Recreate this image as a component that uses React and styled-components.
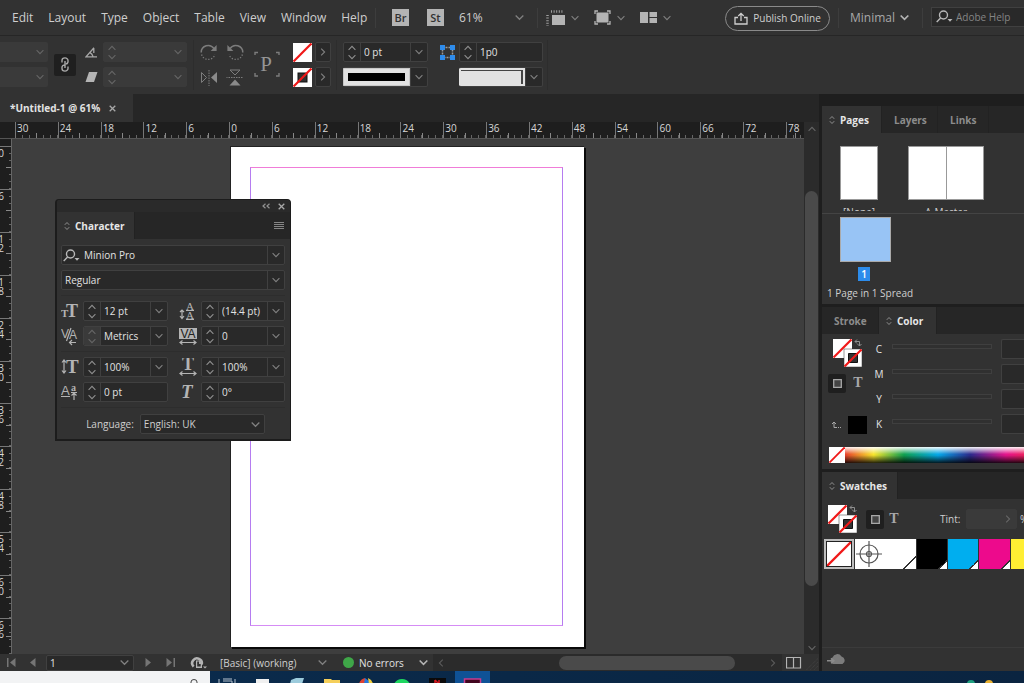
import React from "react";
import styled, { createGlobalStyle } from "styled-components";

const c = {
  panel: "#323232",
  dark: "#262626",
  edge: "#1e1e1e",
  canvas: "#3e3e3e",
  field: "#292929",
  line: "#404040",
  text: "#cfcfcf",
  bright: "#e2e2e2",
  dim: "#8c8c8c",
};

const GlobalStyle = createGlobalStyle`
  *, *::before, *::after { box-sizing: border-box; }
  body { margin: 0; background: ${c.canvas}; overflow: hidden; }
  body, button, input, select { font-family: "Open Sans", "Noto Sans", sans-serif; }
  button, input, select { margin: 0; padding: 0; border: 0; border-radius: 0; background: none; color: inherit; font-size: inherit; }
  svg { display: block; flex: none; }
`;

/* ---------- shell ---------- */

const Shell = styled.div`
  display: flex;
  flex-direction: column;
  height: 100vh;
  overflow: hidden;
  color: ${c.text};
  font-size: 10px;
  background: ${c.panel};
`;

const Row = styled.div`
  display: flex;
  align-items: center;
  gap: ${(p) => p.$gap || 0}px;
`;

const Stack = styled.div`
  display: flex;
  flex-direction: column;
  flex: none;
  gap: ${(p) => p.$gap || 0}px;
  width: ${(p) => (p.$w ? p.$w + "px" : "auto")};
  margin-left: ${(p) => p.$ml || 0}px;
`;

const IconButton = styled.button`
  display: flex;
  align-items: center;
  justify-content: center;
  flex: none;
  width: ${(p) => p.$w || 16}px;
  height: ${(p) => p.$h || 20}px;
  margin-left: ${(p) => p.$ml || 0}px;
  color: ${(p) => p.$color || "#8f8f8f"};
  background: ${(p) => p.$bg || "none"};
  border-radius: 2px;
`;

const Divider = styled.span`
  flex: none;
  width: 1px;
  height: ${(p) => p.$h || 20}px;
  margin: 0 ${(p) => p.$r || 0}px 0 ${(p) => p.$l || 0}px;
  background: ${(p) => (p.$h ? "#2d2d2d" : "#3d3d3d")};
`;

/* ---------- menu bar ---------- */

const MenuBar = styled.header`
  display: flex;
  align-items: center;
  flex: none;
  height: 36px;
  border-bottom: 1px solid ${c.dark};
  font-size: 12px;
  white-space: nowrap;
  overflow: hidden;
`;

const Menus = styled.nav`
  display: flex;
  flex: none;
  gap: 15px;
  width: 375px;
  padding-left: 12px;
`;

const MenuButton = styled.button`
  line-height: 20px;
`;

const AppBadge = styled.button`
  flex: none;
  width: 17px;
  height: 17px;
  margin-left: ${(p) => p.$ml}px;
  background: #b4b4b4;
  color: #323232;
  font-weight: 600;
  font-size: 11px;
  line-height: 16px;
`;

const PublishSlot = styled.div`
  display: flex;
  justify-content: flex-end;
  flex: none;
  width: 155px;
`;

const Publish = styled.button`
  display: flex;
  align-items: center;
  justify-content: center;
  gap: 5px;
  flex: none;
  width: 105px;
  height: 25px;
  margin-top: 1px;
  border: 1px solid #8a8a8a;
  border-radius: 13px;
  font-size: 10px;
`;

const HelpSearch = styled.label`
  display: flex;
  align-items: center;
  gap: 3px;
  flex: 1;
  min-width: 60px;
  height: 20px;
  margin-bottom: 2px;
  padding-left: 4px;
  border: 1px solid ${c.line};
  border-right: 0;
  background: ${c.field};
  font-size: 10px;
  input { width: 100%; min-width: 0; outline: 0; }
  input::placeholder { color: #858585; opacity: 1; }
`;

/* ---------- controls ---------- */

const SelectWrap = styled.label`
  display: grid;
  align-items: center;
  flex: none;
  width: ${(p) => p.$w}px;
  height: ${(p) => p.$h || 20}px;
  margin-left: ${(p) => p.$ml || 0}px;
  color: ${(p) => p.$color || c.text};
  border: 1px solid ${(p) => (p.$box ? c.line : "transparent")};
  border-radius: 2px;
  background: ${(p) => (p.$box ? c.field : "none")};
  > * { grid-area: 1 / 1; }
  > svg { justify-self: end; margin-right: ${(p) => (p.$box ? 4 : 0)}px; pointer-events: none; }
  select { appearance: none; width: 100%; height: 100%; padding-left: ${(p) => (p.$box ? 3 : 0)}px; outline: 0; }
`;

const Field = styled.div`
  display: flex;
  flex: none;
  width: ${(p) => (p.$w ? p.$w + "px" : "100%")};
  height: 20px;
  border: 1px solid ${(p) => (p.$off ? "#3a3a3a" : c.line)};
  border-radius: 2px;
  background: ${(p) => (p.$off ? "#3a3a3a" : c.field)};
  overflow: hidden;
  input { flex: 1; min-width: 0; width: 0; padding-left: 3px; outline: 0; color: ${c.bright}; }
`;

const Spinner = styled.span`
  display: flex;
  flex-direction: column;
  justify-content: center;
  gap: 3px;
  flex: none;
  width: 17px;
  border-right: 1px solid ${(p) => (p.$off ? "transparent" : c.line)};
  background: ${(p) => (p.$raised ? "#3a3a3a" : "none")};
  button { display: flex; justify-content: center; height: 6px; align-items: center; }
`;

const DropButton = styled.button`
  display: flex;
  align-items: center;
  justify-content: center;
  flex: none;
  width: 17px;
  border-left: 1px solid ${(p) => (p.$off ? "transparent" : c.line)};
`;

function Chevron({ w = 8, dir = "down", color = "#808080", sw = 1.1 }) {
  const rot = { down: 0, up: 180, right: -90, left: 90 }[dir];
  return (
    <svg width={w} height={w} viewBox="0 0 8 8" fill="none" stroke={color} strokeWidth={sw}>
      <path d="M0.6 2.2 L4 5.6 L7.4 2.2" transform={`rotate(${rot} 4 4)`} />
    </svg>
  );
}

function Spin({ off, raised }) {
  const col = off || raised ? "#666" : "#8f8f8f";
  return (
    <Spinner $off={off} $raised={raised}>
      <button aria-label="Increase"><Chevron dir="up" color={col} /></button>
      <button aria-label="Decrease"><Chevron color={col} /></button>
    </Spinner>
  );
}

function NumberField({ label, value = "", w, drop = true, off, raised }) {
  return (
    <Field $w={w} $off={off}>
      <Spin off={off} raised={raised} />
      <input aria-label={label} defaultValue={value} disabled={off} />
      {drop && <DropButton $off={off} aria-label={label + " options"}><Chevron color={off ? "#666" : "#808080"} /></DropButton>}
    </Field>
  );
}

function Select({ label, value, w, h, ml, box, color, chevron }) {
  return (
    <SelectWrap $w={w} $h={h} $ml={ml} $box={box} $color={color}>
      <select aria-label={label} defaultValue={value}><option>{value}</option></select>
      <Chevron w={9} {...chevron} />
    </SelectWrap>
  );
}

function SearchIcon() {
  return (
    <svg width="17" height="13" viewBox="0 0 17 13" fill="none" stroke="#b8b8b8" strokeWidth="1.4">
      <circle cx="7.5" cy="5" r="4" />
      <path d="M4.6 8 L0.7 12" />
      <path d="M11.5 9 h5 l-2.5 2.8 z" fill="#b8b8b8" stroke="none" />
    </svg>
  );
}

/* ---------- control strip ---------- */

const ControlBar = styled.div`
  display: flex;
  align-items: center;
  flex: none;
  height: 58px;
  padding-bottom: 1px;
  overflow: hidden;
`;

const OpenField = styled.div`
  display: flex;
  justify-content: flex-end;
  width: 48px;
  height: 20px;
  background: #3a3a3a;
  border-radius: 0 2px 2px 0;
`;

const PreviewField = styled(Field)`
  border-left: 0;
`;

const StrokePreview = styled.span`
  display: flex;
  align-items: center;
  flex: 1;
  padding: 0 4px;
  border: 1px solid #c8c8c8;
  background: #e2e2e2;
  &::after { content: ""; flex: 1; height: 8px; background: #000; }
`;

const CornerPreview = styled.span`
  flex: 1;
  padding: 2px;
  background: #e2e2e2;
  &::after { content: ""; display: block; height: 14px; border: solid #444; border-width: 1px 2px 0 0; }
`;

const ArrowBox = styled(IconButton)`
  border: 1px solid ${c.line};
  background: ${c.field};
`;

function NoneSwatch({ size = 19, hollow }) {
  return (
    <svg width={size} height={size} viewBox="0 0 19 19">
      <rect width="19" height="19" fill="#fff" />
      {hollow && <rect x="5" y="5" width="9" height="9" fill="#323232" stroke="#111" />}
      <path d="M0.5 18.5 L18.5 0.5" stroke="#f01818" strokeWidth="2.2" />
    </svg>
  );
}

function Rotate({ flip }) {
  return (
    <svg width="18" height="17" viewBox="0 0 18 17" fill="none" stroke="#7c7c7c" strokeWidth="1.5">
      <g transform={flip ? "translate(18 0) scale(-1 1)" : undefined}>
        <path d="M1.2 8.5 A7 7 0 0 1 14 4.6" />
        <path d="M16.6 1 V7 H10.6 Z" fill="#7c7c7c" stroke="none" />
        <path d="M1.6 10.5 A7 7 0 0 0 15 10.5" strokeDasharray="1.3 1.6" strokeWidth="1.2" />
      </g>
    </svg>
  );
}

function FlipIcon({ vertical }) {
  return (
    <svg width="18" height="17" viewBox="0 0 18 17" fill="none" stroke="#7c7c7c">
      <g transform={vertical ? "rotate(90 9 8.5)" : undefined}>
        <path d="M1.5 3.5 V13.5 L6.5 8.5 Z" />
        <path d="M9 1 V17" strokeDasharray="1.5 1" />
        <path d="M17 3 V14 L11 8.5 Z" fill="#8a8a8a" stroke="none" />
      </g>
    </svg>
  );
}

function ControlStrip() {
  return (
    <ControlBar>
      <Stack $gap={5}>
        {["X", "Y"].map((k) => (
          <OpenField key={k}><DropButton $off aria-label={k + " options"}><Chevron color="#666" /></DropButton></OpenField>
        ))}
      </Stack>
      <IconButton $w={22} $h={22} $ml={6} $bg="#1f1f1f" aria-label="Constrain proportions">
        <svg width="8" height="15" viewBox="0 0 8 15" fill="none" stroke="#a8a8a8" strokeWidth="1.4">
          <path d="M1 5.5 V3.5 A3 2.6 0 0 1 7 3.5 V5 A2.5 2.5 0 0 1 4.5 7" />
          <path d="M7 9.5 V11.5 A3 2.6 0 0 1 1 11.5 V10 A2.5 2.5 0 0 1 3.5 8 M4 4 V11" />
        </svg>
      </IconButton>
      <Stack $gap={5} $ml={7}>
        <IconButton as="span"><svg width="13" height="11" viewBox="0 0 13 11" fill="none" stroke="#a8a8a8" strokeWidth="1.3"><path d="M9 0.8 L1 9.8 H12 M5 5.6 A6 6 0 0 1 8 9.6 M8.8 1 V6" /></svg></IconButton>
        <IconButton as="span"><svg width="13" height="10" viewBox="0 0 13 10"><path d="M4 0 H12.5 L9 10 H0.5 Z" fill="#b4b4b4" /></svg></IconButton>
      </Stack>
      <Stack $gap={5} $w={84} $ml={4}>
        <NumberField label="Rotation angle" off />
        <NumberField label="Shear angle" off />
      </Stack>
      <Divider $h={50} $l={6} $r={6} />
      <Stack $gap={5}>
        <Row $gap={8}>
          <IconButton $w={18} aria-label="Rotate clockwise"><Rotate /></IconButton>
          <IconButton $w={18} aria-label="Rotate anticlockwise"><Rotate flip /></IconButton>
        </Row>
        <Row $gap={8}>
          <IconButton $w={18} aria-label="Flip horizontal"><FlipIcon /></IconButton>
          <IconButton $w={18} aria-label="Flip vertical"><FlipIcon vertical /></IconButton>
        </Row>
      </Stack>
      <Stack $ml={10}>
        <svg width="26" height="27" viewBox="0 0 26 27" fill="none" stroke="#7c7c7c">
          <path d="M1 4 V1.5 H4 M22 1.5 H25 V4 M1 22 V25 H4 M22 25 H25 V22" strokeWidth="1.4" />
          <text x="12" y="20" textAnchor="middle" fontFamily="Liberation Serif" fontSize="21" fill="#959595" stroke="none">P</text>
        </svg>
      </Stack>
      <Stack $gap={6} $ml={13}>
        <NoneSwatch />
        <NoneSwatch hollow />
      </Stack>
      <Stack $gap={5} $ml={3}>
        <ArrowBox aria-label="Fill options"><Chevron dir="right" /></ArrowBox>
        <ArrowBox aria-label="Stroke options"><Chevron dir="right" /></ArrowBox>
      </Stack>
      <Divider $h={50} $l={5} $r={6} />
      <Stack $gap={5} $w={85}>
        <NumberField label="Stroke weight" value="0 pt" />
        <PreviewField><StrokePreview /><DropButton aria-label="Stroke type"><Chevron /></DropButton></PreviewField>
      </Stack>
      <Stack $gap={5} $ml={11}>
        <IconButton as="span">
          <svg width="15" height="15" viewBox="0 0 15 15"><path d="M2.5 2.5 H12.5 V12.5 H2.5 Z" fill="none" stroke="#999" strokeWidth="1.5" strokeDasharray="2 1" /><path d="M0 0h5v5h-5z M10 0h5v5h-5z M0 10h5v5h-5z M10 10h5v5h-5z" fill="#2f8ceb" /></svg>
        </IconButton>
        <IconButton as="span" />
      </Stack>
      <Stack $gap={5} $w={84} $ml={4}>
        <NumberField label="Corner size" value="1p0" drop={false} />
        <PreviewField><CornerPreview /><DropButton aria-label="Corner shape"><Chevron /></DropButton></PreviewField>
      </Stack>
      <Divider $h={50} $l={4} />
    </ControlBar>
  );
}

function TopMenu() {
  return (
    <MenuBar>
      <Menus>
        {["Edit", "Layout", "Type", "Object", "Table", "View", "Window", "Help"].map((m) => <MenuButton key={m}>{m}</MenuButton>)}
      </Menus>
      <Divider />
      <AppBadge $ml={16}>Br</AppBadge>
      <AppBadge $ml={18}>St</AppBadge>
      <Select label="Zoom level" value="61%" w={67} ml={14} />
      <Divider $l={12} $r={8} />
      <svg width="19" height="16" viewBox="0 0 19 16"><path d="M6 5 h13 v10 h-13z" fill="#b4b4b4" /><path d="M5 1.5 H18 M1.5 5 V16" stroke="#a0a0a0" strokeWidth="2.5" strokeDasharray="1 1.6" /></svg>
      <IconButton aria-label="View options" $ml={2}><Chevron /></IconButton>
      <IconButton aria-label="Screen mode" $ml={10} $w={18}>
        <svg width="17" height="15" viewBox="0 0 17 15"><path d="M2.5 2.500h12v10h-12z" fill="#b4b4b4" /><path d="M1 4V1H4M13 1h3v3M1 11v3h3M13 14h3v-3" fill="none" stroke="#b4b4b4" strokeWidth="1.3" /></svg>
      </IconButton>
      <IconButton aria-label="Screen mode options" $ml={2}><Chevron /></IconButton>
      <IconButton aria-label="Arrange documents" $ml={10} $w={18}>
        <svg width="17" height="11" viewBox="0 0 17 11"><path d="M0 0h8v11h-8z M9.5 0h7.500v5h-7.500z M9.5 6h7.500v5h-7.500z" fill="#b4b4b4" /></svg>
      </IconButton>
      <IconButton aria-label="Arrange options" $ml={2}><Chevron /></IconButton>
      <PublishSlot>
        <Publish>
          <svg width="14" height="13" viewBox="0 0 14 13" fill="none" stroke="#cfcfcf" strokeWidth="1.3"><path d="M4 5.5H1V12H13V5.5H10M7 9V1.5M4.3 4L7 1.3L9.7 4" /></svg>
          Publish Online
        </Publish>
      </PublishSlot>
      <Divider $l={8} $r={10} />
      <Select label="Workspace" value="Minimal" w={61} color="#a8a8a8" chevron={{ sw: 1.5, color: "#b4b4b4" }} />
      <Divider $l={12} $r={8} />
      <HelpSearch><SearchIcon /><input aria-label="Adobe Help" placeholder="Adobe Help" /></HelpSearch>
    </MenuBar>
  );
}

/* ---------- document area ---------- */

const Main = styled.main`
  display: flex;
  flex: 1;
  min-height: 0;
`;

const DocColumn = styled.section`
  display: flex;
  flex-direction: column;
  flex: 1;
  min-width: 0;
  background: ${c.dark};
`;

const DocTab = styled.div`
  display: flex;
  align-items: center;
  gap: 9px;
  flex: none;
  width: 133px;
  height: 28px;
  padding-left: 10px;
  background: ${c.panel};
  color: ${c.bright};
  font-weight: 700;
  white-space: nowrap;
`;

const Viewport = styled.div`
  display: flex;
  flex: 1;
  min-height: 0;
`;

const RulerArea = styled.div`
  display: flex;
  flex-direction: column;
  flex: 1;
  min-width: 0;
`;

const TopRuler = styled.div`
  display: grid;
  grid-template-columns: repeat(18, 1fr) 18px;
  flex: none;
  height: 17px;
  padding-left: 15px;
  background: ${c.edge};
  border-bottom: 1px solid #555;
  overflow: hidden;
`;

const Inch = styled.span`
  padding-left: 1px;
  border-left: 1px solid #777;
  color: #d8d8d8;
  font-size: 10px;
  line-height: 13px;
  overflow: hidden;
  background:
    linear-gradient(#888, #888) 50% 100% / 1px 5px no-repeat,
    repeating-linear-gradient(90deg, transparent 0 6px, #666 6px 7px) 0 100% / 100% 3px no-repeat;
`;

const CanvasRow = styled.div`
  display: flex;
  flex: 1;
  min-height: 0;
`;

const SideRuler = styled.div`
  display: grid;
  grid-template-rows: repeat(11, 1fr) 36px;
  flex: none;
  width: 12px;
  padding-top: 7px;
  background: ${c.edge};
  border-right: 1px solid #666;
  overflow: hidden;
`;

const SideInch = styled.span`
  display: flex;
  flex-direction: column;
  align-items: flex-end;
  padding: 2px 7px 0 0;
  border-top: 1px solid #777;
  color: #d8d8d8;
  font-size: 10px;
  line-height: 9px;
  overflow: hidden;
  background:
    linear-gradient(#888, #888) 100% 50% / 5px 1px no-repeat,
    repeating-linear-gradient(transparent 0 6px, #666 6px 7px) 100% 0 / 2px 100% no-repeat;
`;

const Canvas = styled.div`
  position: relative;
  display: flex;
  justify-content: center;
  flex: 1;
  min-width: 0;
  padding: 7px 3px 7px 0;
  background: ${c.canvas};
`;

const Paper = styled.div`
  display: flex;
  width: 354px;
  padding: 20px 21px 21px 19px;
  background: #fff;
  box-shadow: 2px 2px 0 #0a0a0a;
  border: 1px solid #222;
  border-width: 1px 0 0 1px;
  &::after { content: ""; flex: 1; border: 1px solid #b57cf0; border-top-color: #f07cd8; border-bottom-color: #d58cf5; }
`;

const VScroll = styled.div`
  display: flex;
  flex-direction: column;
  align-items: center;
  justify-content: space-between;
  flex: none;
  width: 15px;
  padding: 3px 0 2px;
  background: #2b2b2b;
`;

const VThumb = styled.span`
  width: 13px;
  height: 75%;
  border-radius: 7px;
  background: #4a4a4a;
`;

/* ---------- status bar ---------- */

const StatusBar = styled.footer`
  display: flex;
  align-items: center;
  flex: none;
  height: 17px;
  background: ${c.panel};
  white-space: nowrap;
  overflow: hidden;
`;

const StatusDot = styled.span`
  flex: none;
  width: 11px;
  height: 11px;
  margin: 0 4px 0 15px;
  border-radius: 50%;
  background: #3fa648;
`;

const HScroll = styled.div`
  display: flex;
  align-items: center;
  justify-content: space-between;
  flex: 1;
  height: 100%;
  margin-left: 4px;
  padding: 0 5px 0 4px;
  background: #2b2b2b;
`;

const HThumb = styled.span`
  width: 176px;
  height: 14px;
  margin-left: 80px;
  border-radius: 7px;
  background: #4a4a4a;
`;

function Step({ bar, flip, label, ml }) {
  return (
    <IconButton $w={12} $h={14} $ml={ml} aria-label={label}>
      <svg width="10" height="9" viewBox="0 0 10 9" fill="#757575">
        <g transform={flip ? "translate(10 0) scale(-1 1)" : undefined}>
          {bar && <path d="M0 0h1.5v9h-1.5z" />}
          <path d="M8.5 0V9L3 4.5Z" />
        </g>
      </svg>
    </IconButton>
  );
}

function DocumentStatus() {
  return (
    <StatusBar>
      <Step bar label="First page" ml={6} />
      <Step label="Previous page" ml={8} />
      <Select label="Page" value="1" w={88} h={16} ml={8} box color={c.bright} chevron={{}} />
      <Step flip label="Next page" ml={9} />
      <Step bar flip label="Last page" ml={9} />
      <IconButton $w={18} $h={16} $ml={13} aria-label="Preflight">
        <svg width="17" height="13" viewBox="0 0 17 13" fill="none" stroke="#b4b4b4" strokeWidth="2.6">
          <path d="M3.6 10.6 A4.800 4.800 0 1 1 11.6 8.5" />
          <path d="M6 4.500h3.500l2.500 2.500v5h-6z" fill="#b4b4b4" stroke="none" />
          <path d="M7.2 5.500v5h3.500v-2.500h-1.700v-2.500z" fill="#323232" stroke="none" />
          <path d="M13 10.5h4l-2 2z" fill="#b4b4b4" stroke="none" />
        </svg>
      </IconButton>
      <Select label="Preflight profile" value="[Basic] (working)" w={109} h={16} ml={12} />
      <StatusDot />
      <Select label="Errors" value="No errors" w={71} h={16} color={c.bright} chevron={{ color: "#b4b4b4", sw: 1.4 }} />
      <HScroll><Chevron dir="left" color="#5a5a5a" /><HThumb /><Chevron dir="right" color="#5a5a5a" /></HScroll>
      <IconButton $w={20} $h={14} $ml={2} aria-label="Split layout">
        <svg width="16" height="12" viewBox="0 0 16 12" fill="none" stroke="#b4b4b4"><path d="M0.5 0.5h14v10.500h-14zM7.5 0v11" strokeWidth="1.2" /></svg>
      </IconButton>
      <svg width="15" height="16" viewBox="0 0 16 16" stroke="#484848" strokeDasharray="1 1"><path d="M3 15L15 3M7 15L15 7M11 15L15 11" /></svg>
    </StatusBar>
  );
}

/* ---------- tabbed panels ---------- */

const Tabs = styled.div`
  display: flex;
  flex: none;
  height: 27px;
  background: ${c.dark};
`;

const Tab = styled.button`
  display: flex;
  align-items: center;
  gap: 5px;
  width: ${(p) => p.$w}px;
  padding-left: ${(p) => (p.$on ? 7 : 12)}px;
  border-right: 1px solid #222;
  background: ${(p) => (p.$on ? c.panel : "none")};
  color: ${(p) => (p.$on ? "#e6e6e6" : c.dim)};
  font-weight: 700;
  font-size: 10px;
`;

function PanelTab({ on, w, children }) {
  return (
    <Tab $on={on} $w={w}>
      {on && <svg width="6" height="10" viewBox="0 0 6 10" fill="none" stroke="#8f8f8f"><path d="M0.8 3.8L3 1.5L5.2 3.8M0.8 6.2L3 8.5L5.2 6.2" /></svg>}
      {children}
    </Tab>
  );
}

const Floating = styled.section`
  position: absolute;
  left: 43px;
  top: 60px;
  width: 236px;
  border: 1px solid #1c1c1c;
  border-width: 1px 1px 2px 2px;
  border-radius: 4px 4px 0 0;
  background: ${c.panel};
  overflow: hidden;
`;

const TitleStrip = styled.div`
  display: flex;
  align-items: center;
  justify-content: flex-end;
  height: 12px;
  padding-right: 5px;
  gap: 8px;
  background: #2a2a2a;
`;

const TabLine = styled.div`
  display: flex;
  justify-content: space-between;
  align-items: center;
  padding-right: 6px;
  background: ${c.dark};
`;

const CharBody = styled.div`
  display: flex;
  flex-direction: column;
  gap: 5px;
  padding: 6px 5px 4px 4px;
`;

const Rule = styled.hr`
  width: 100%;
  height: 1px;
  margin: 0;
  border: 0;
  background: #2d2d2d;
`;

const CharGrid = styled.div`
  display: grid;
  grid-template-columns: 18px 85px 25px 84px;
  column-gap: 4px;
  row-gap: 5px;
  align-items: center;
  > :nth-child(4n + 3) { margin-left: 7px; }
`;

const LanguageRow = styled.div`
  display: flex;
  align-items: center;
  justify-content: center;
  gap: 6px;
  padding: 1px 0 1px 5px;
`;

const glyph = { fontFamily: "Liberation Serif", fill: "#b4b4b4", fontWeight: 700 };
const arrow = { fill: "none", stroke: "#b4b4b4", strokeWidth: 1.2 };

function CharIcon({ kind }) {
  const art = {
    size: <><text {...glyph} x="0" y="15" fontSize="11">T</text><text {...glyph} x="5" y="15" fontSize="18">T</text></>,
    leading: <><path {...arrow} d="M3 8V16M1 10L3 8L5 10M1 14L3 16.500L5 14" /><text {...glyph} fontWeight="400" x="7" y="8" fontSize="11">A</text><text {...glyph} fontWeight="400" x="7" y="17" fontSize="11">A</text><path {...arrow} d="M7 8.5H15M7 17.4H15" /></>,
    kerning: <><text {...glyph} fontFamily="Liberation Sans" fontWeight="400" x="0" y="11" fontSize="12">V</text><text {...glyph} fontFamily="Liberation Sans" fontWeight="400" x="8" y="12" fontSize="12">A</text><path {...arrow} d="M10 1L5.500 14M8 15.500H15M11 13L8.500 15.500L11 18" /></>,
    tracking: <><path d="M0 1h18v11h-18z" fill="#b4b4b4" /><text x="9" y="10.5" textAnchor="middle" fontFamily="Liberation Sans" fontSize="12" fill="#222">VA</text><path {...arrow} d="M1 15.500H17M3.500 13.500L1 15.500L3.500 17.500M14.500 13.500L17 15.500L14.500 17.500" /></>,
    vscale: <><path {...arrow} d="M3 2V15M1 4.500L3 2L5 4.500M1 12.500L3 15L5 12.500" /><text {...glyph} x="5" y="15" fontSize="19">T</text></>,
    hscale: <><text {...glyph} x="3" y="12" fontSize="18">T</text><path {...arrow} d="M1 15.500H17M3.500 13.500L1 15.500L3.500 17.500M14.500 13.500L17 15.500L14.500 17.500" /></>,
    baseline: <><text {...glyph} fontFamily="Liberation Sans" fontWeight="400" x="0" y="12" fontSize="13">A</text><text {...glyph} x="10" y="8" fontSize="10">a</text><path {...arrow} d="M0 13.500H9M10 9.500H16M13 10V17M10.500 12.500L13 10L15.500 12.500" /></>,
    skew: <text {...glyph} x="2" y="15" fontSize="19" fontStyle="italic">T</text>,
  }[kind];
  return <svg width="18" height="19" viewBox="0 0 18 19">{art}</svg>;
}

const CloseIcon = () => (
  <svg width="7" height="7" viewBox="0 0 7 7" stroke="#a8a8a8" strokeWidth="1.3"><path d="M0.7 0.7L6.3 6.3M6.3 0.7L0.7 6.3" /></svg>
);

const FontField = styled.div`
  display: flex;
  align-items: center;
  height: 20px;
  padding-left: 1px;
  border: 1px solid ${c.line};
  border-radius: 2px;
  background: ${c.field};
  input { flex: 1; min-width: 0; padding-left: 4px; outline: 0; color: ${c.bright}; }
  > button { height: 18px; }
`;

function CharacterPanel() {
  return (
    <Floating>
      <TitleStrip>
        <button aria-label="Collapse"><svg width="8" height="6" viewBox="0 0 8 6" fill="none" stroke="#8f8f8f" strokeWidth="1.2"><path d="M3.5 0.8L1 3L3.5 5.2M7.5 0.8L5 3L7.5 5.2" /></svg></button>
        <button aria-label="Close"><CloseIcon /></button>
      </TitleStrip>
      <TabLine>
        <Tabs><PanelTab on w={78}>Character</PanelTab></Tabs>
        <button aria-label="Panel menu"><svg width="10" height="8" viewBox="0 0 10 8" stroke="#858585"><path d="M0 0.5H10M0 2.5H10M0 4.5H10M0 6.5H10" /></svg></button>
      </TabLine>
      <CharBody>
        <FontField><SearchIcon /><input aria-label="Font family" defaultValue="Minion Pro" /><DropButton aria-label="Font list"><Chevron /></DropButton></FontField>
        <Field><input aria-label="Font style" defaultValue="Regular" /><DropButton aria-label="Style list"><Chevron /></DropButton></Field>
        <Rule />
        <CharGrid>
          <CharIcon kind="size" /><NumberField label="Font size" value="12 pt" />
          <CharIcon kind="leading" /><NumberField label="Leading" value="(14.4 pt)" />
          <CharIcon kind="kerning" /><NumberField label="Kerning" value="Metrics" raised />
          <CharIcon kind="tracking" /><NumberField label="Tracking" value="0" />
        </CharGrid>
        <Rule />
        <CharGrid>
          <CharIcon kind="vscale" /><NumberField label="Vertical scale" value="100%" />
          <CharIcon kind="hscale" /><NumberField label="Horizontal scale" value="100%" />
          <CharIcon kind="baseline" /><NumberField label="Baseline shift" value="0 pt" drop={false} />
          <CharIcon kind="skew" /><NumberField label="Skew" value="0°" drop={false} />
        </CharGrid>
        <Rule />
        <LanguageRow>
          <span>Language:</span>
          <Select label="Language" value="English: UK" w={125} box chevron={{}} />
        </LanguageRow>
      </CharBody>
    </Floating>
  );
}

/* ---------- dock ---------- */

const Dock = styled.aside`
  display: flex;
  flex-direction: column;
  flex: none;
  width: 205px;
  padding-top: 12px;
  border-left: 3px solid ${c.edge};
  background: ${c.edge};
  gap: 3px;
  overflow: hidden;
`;

const Panel = styled.section`
  display: flex;
  flex-direction: column;
  flex: ${(p) => (p.$grow ? "1" : "none")};
  background: ${c.panel};
`;

const Masters = styled.div`
  display: flex;
  gap: 30px;
  height: 81px;
  padding: 13px 0 0 18px;
  border-bottom: 1px solid #444;
`;

const Master = styled.figure`
  display: flex;
  flex-direction: column;
  align-items: center;
  flex: none;
  margin: 0;
  gap: 5px;
  height: 65px;
  overflow: hidden;
  line-height: 14px;
`;

const Sheets = styled.div`
  display: grid;
  flex: none;
  grid-template-columns: repeat(${(p) => p.$n}, 1fr);
  gap: 1px;
  width: ${(p) => p.$n * 38}px;
  height: 54px;
  border: 1px solid #999;
  background: #999;
  span { background: #fff; }
`;

const PageItem = styled.div`
  display: flex;
  flex-direction: column;
  align-items: center;
  gap: 5px;
  width: 51px;
  margin: 3px 0 0 18px;
`;

const PageThumb = styled.div`
  width: 51px;
  height: 45px;
  background: #98c4f5;
  border: 1px solid #aaa;
`;

const PageBadge = styled.span`
  width: 12px;
  height: 14px;
  margin-right: 3px;
  background: #2c8ceb;
  color: #fff;
  font-weight: 600;
  line-height: 14px;
  text-align: center;
`;

const Caption = styled.p`
  margin: 0;
  padding: 4px 0 3px 5px;
  line-height: 16px;
`;

const ColorBody = styled.div`
  display: flex;
  height: 108px;
  padding: 5px 0 0 6px;
`;

const ToolColumn = styled.div`
  display: grid;
  grid-template-columns: 20px 20px;
  grid-template-rows: 28px 6px 20px 22px 20px;
  width: 45px;
  align-items: center;
`;

const ProxySlot = styled.div`
  grid-column: 1 / 3;
  padding-left: 5px;
`;

const TypeGlyph = styled.button`
  flex: none;
  width: 20px;
  font-family: "Liberation Serif", serif;
  font-weight: 700;
  font-size: 14px;
  color: #a8a8a8;
`;

const BlackChip = styled.button`
  width: 19px;
  height: 18px;
  background: #000;
`;

const Channels = styled.div`
  display: flex;
  flex-direction: column;
  gap: 5px;
  flex: 1;
`;

const Channel = styled.div`
  display: grid;
  grid-template-columns: 19px 100px 1fr;
  align-items: center;
  label { color: ${c.bright}; text-align: center; padding-right: 7px; }
  input[type="range"] {
    appearance: none;
    width: 100px;
    height: 5px;
    margin-bottom: 6px;
    border: 1px solid #3f3f3f;
    background: #303030;
  }
  input[type="range"]::-webkit-slider-thumb { appearance: none; width: 0; height: 0; }
`;

const ChannelValue = styled.input`
  min-width: 0;
  width: auto;
  height: 20px;
  margin-left: 9px;
  border: 1px solid ${c.line};
  border-right: 0;
  border-radius: 2px 0 0 2px;
  background: ${c.field};
`;

const SpectrumRow = styled.div`
  display: flex;
  height: 22px;
  margin: 5px 0 0 7px;
`;

const Spectrum = styled.div`
  flex: 1;
  height: 16px;
  background:
    linear-gradient(rgba(255, 255, 255, 0.95), rgba(255, 255, 255, 0) 45%, rgba(0, 0, 0, 0) 50%, rgba(0, 0, 0, 0.85)),
    linear-gradient(90deg, #e8402c, #f7e52e 16%, #10a050 33%, #05a8ea 52%, #2c2a8c 70%, #e5148c 90%, #ec2060);
`;

function Proxy() {
  return (
    <svg width="29" height="28" viewBox="0 0 29 28">
      <path d="M0 0h19v19h-19z" fill="#fff" />
      <path d="M0.5 18.5L18.5 0.5" stroke="#f01818" strokeWidth="2.2" />
      <path d="M11 10h18v18h-18z" fill="#fff" stroke="#323232" strokeWidth="0.5" />
      <path d="M15.5 14.5h9v9h-9z" fill="#323232" stroke="#111" />
      <path d="M11.5 27.5L28.5 10.5" stroke="#f01818" strokeWidth="2.2" />
      <path d="M22 2.5H26.5V7M24.5 5L26.5 7L28.5 5M24 0.5L22 2.5L24 4.5" fill="none" stroke="#8f8f8f" />
    </svg>
  );
}

const BoxGlyph = () => (
  <svg width="9" height="9" viewBox="0 0 9 9"><path d="M0.7 0.7h7.600v7.600h-7.600z" fill="#444" stroke="#a8a8a8" strokeWidth="1.3" /></svg>
);

function ColorPanel() {
  return (
    <Panel>
      <Tabs><PanelTab w={57}>Stroke</PanelTab><PanelTab on w={58}>Color</PanelTab></Tabs>
      <ColorBody>
        <ToolColumn>
          <ProxySlot><Proxy /></ProxySlot>
          <span /><span />
          <IconButton $w={18} $h={19} $bg="#1f1f1f" aria-label="Formatting affects container"><BoxGlyph /></IconButton>
          <TypeGlyph aria-label="Formatting affects text">T</TypeGlyph>
          <span /><span />
          <IconButton aria-label="Last used colour"><svg width="10" height="8" viewBox="0 0 10 8" fill="none" stroke="#a8a8a8"><path d="M1 3L3 1L5 3M3 1V6.5H6M7 6.5H8M9 6.5H10" /></svg></IconButton>
          <BlackChip aria-label="Black" />
        </ToolColumn>
        <Channels>
          {["C", "M", "Y", "K"].map((k) => (
            <Channel key={k}>
              <label htmlFor={"ch-" + k}>{k}</label>
              <input id={"ch-" + k} type="range" defaultValue="0" />
              <ChannelValue aria-label={k + " value"} />
            </Channel>
          ))}
        </Channels>
      </ColorBody>
      <SpectrumRow><NoneSwatch size={16} /><Spectrum /></SpectrumRow>
    </Panel>
  );
}

const SwatchTools = styled.div`
  display: flex;
  align-items: center;
  height: 40px;
  padding-left: 6px;
  overflow: hidden;
  white-space: nowrap;
`;

const TintLabel = styled.label`
  flex: none;
  width: 26px;
  margin-left: 36px;
`;

const TintField = styled(Field)`
  margin-right: 3px;
`;

const SwatchRow = styled.div`
  display: flex;
  gap: 1px;
  height: 31px;
  margin-left: 2px;
  overflow: hidden;
`;

const Swatch = styled.button`
  display: flex;
  align-items: center;
  flex: none;
  width: ${(p) => p.$w || 30}px;
  height: 30px;
  background: ${(p) => (p.$plain ? p.$fill : `linear-gradient(135deg, ${p.$fill} 85%, #333 85% 87%, #fff 87%)`)};
  border: ${(p) => (p.$ring ? "2px solid #bdbdbd" : 0)};
  outline: ${(p) => (p.$ring ? "1px solid #222" : 0)};
  outline-offset: -3px;
`;

const PanelFooter = styled.div`
  display: flex;
  align-items: center;
  height: 24px;
  margin-top: auto;
  padding: 0 0 2px 5px;
  border-top: 1px solid #3b3b3b;
`;

function SwatchesPanel() {
  return (
    <Panel $grow>
      <Tabs><PanelTab on w={76}>Swatches</PanelTab></Tabs>
      <SwatchTools>
        <Proxy />
        <IconButton $w={18} $h={19} $ml={9} $bg="#1f1f1f" aria-label="Formatting affects container"><BoxGlyph /></IconButton>
        <TypeGlyph aria-label="Formatting affects text">T</TypeGlyph>
        <TintLabel htmlFor="tint">Tint:</TintLabel>
        <TintField $w={51} $off><input id="tint" disabled /><DropButton $off aria-label="Tint slider"><Chevron dir="right" color="#666" /></DropButton></TintField>
        %
      </SwatchTools>
      <SwatchRow>
        <Swatch $fill="#fff" $plain $ring aria-label="None"><svg width="26" height="26" viewBox="0 0 26 26"><path d="M1 25L25 1" stroke="#f01818" strokeWidth="2.4" /></svg></Swatch>
        <Swatch $fill="#fff" $w={61} aria-label="Registration">
          <svg width="28" height="28" viewBox="0 0 28 28" fill="none" stroke="#555" strokeWidth="1.2"><circle cx="14" cy="14" r="9" /><circle cx="14" cy="14" r="2.5" /><path d="M14 1V27M1 14H27" /></svg>
        </Swatch>
        <Swatch $fill="#000" aria-label="Black" />
        <Swatch $fill="#00aeef" aria-label="Cyan" />
        <Swatch $fill="#ed0a8c" $w={31} aria-label="Magenta" />
        <Swatch $fill="#ffee33" aria-label="Yellow" />
      </SwatchRow>
      <PanelFooter>
        <svg width="19" height="12" viewBox="0 0 19 12" fill="#7c7c7c"><path d="M6 11A3.500 3.500 0 0 1 5.500 4.500A5 5 0 0 1 14.500 3.500A4 4 0 0 1 15.500 11Z" /><path d="M0 7.800H6M4 5.300L7 7.800L4 10.300" fill="none" stroke="#8a8a8a" strokeWidth="1.4" /></svg>
      </PanelFooter>
    </Panel>
  );
}

/* ---------- desktop task bar ---------- */

const Taskbar = styled.div`
  display: flex;
  flex: none;
  height: 12px;
  overflow: hidden;
  background: linear-gradient(90deg, #0a2c4e, #0a2440);
`;

const TaskSearch = styled.div`
  display: flex;
  align-items: flex-end;
  justify-content: flex-end;
  flex: none;
  width: 210px;
  padding-right: 12px;
  background: #f2f3f4;
`;

const TaskItem = styled.button`
  display: flex;
  align-items: flex-end;
  justify-content: center;
  width: 35px;
  background: ${(p) => (p.$on ? "#0f5296" : "none")};
`;

const TrayIcons = styled.div`
  display: flex;
  align-items: flex-end;
  margin-left: auto;
  padding-right: 27px;
`;

const taskArt = [
  ["Task view", <path d="M3 1V5M7 3H16V5M7 1H16M19 1V5" stroke="#b8c4d0" fill="none" />],
  ["Store", <path d="M5 1h13v5h-13z" fill="#f0f0f0" />],
  ["Notes", <path d="M5 2L10 0H18L16 6H4Z" fill="#9ccbdc" />],
  ["Explorer", <path d="M3 1H10L11 2H19V6H3Z" fill="#f5cf5a" />],
  ["Browser", <><path d="M3 6A8 8 0 0 1 9 0V6Z" fill="#e04030" /><path d="M9 0L13 3V6H8Z" fill="#2478e0" /><path d="M12 0A8 8 0 0 1 17 6H13Z" fill="#f4d03a" /></>],
  ["Music", <path d="M3 6A9 9 0 0 1 19 6Z" fill="#1ed760" />],
  ["Video", <><path d="M3 0h17v6h-17z" fill="#0a0a0a" /><path d="M9 2V6M9 2L13 6M13 2V6" stroke="#d81820" strokeWidth="1.5" /></>],
  ["Layout editor", <path d="M3.5 1h16v7h-16z" fill="#41061f" stroke="#c83c90" strokeWidth="1.5" />],
];

const topLabels = [30, 24, 18, 12, 6, 0, 6, 12, 18, 24, 30, 36, 42, 48, 54, 60, 66, 72, 78];
const sideLabels = [0, 6, 12, 18, 24, 30, 36, 42, 48, 54, 60, 66];

export default function App() {
  return (
    <Shell>
      <GlobalStyle />
      <TopMenu />
      <ControlStrip />
      <Main>
        <DocColumn>
          <DocTab>*Untitled-1 @ 61%<button aria-label="Close document"><CloseIcon /></button></DocTab>
          <Viewport>
            <RulerArea>
              <TopRuler>{topLabels.map((n, i) => <Inch key={i}>{n}</Inch>)}</TopRuler>
              <CanvasRow>
                <SideRuler>
                  {sideLabels.map((n) => <SideInch key={n}>{String(n).split("").map((d, i) => <span key={i}>{d}</span>)}</SideInch>)}
                </SideRuler>
                <Canvas><Paper /><CharacterPanel /></Canvas>
              </CanvasRow>
            </RulerArea>
            <VScroll><Chevron dir="up" color="#666" /><VThumb /><Chevron color="#666" /></VScroll>
          </Viewport>
          <DocumentStatus />
        </DocColumn>
        <Dock>
          <Panel>
            <Tabs><PanelTab on w={60}>Pages</PanelTab><PanelTab w={56}>Layers</PanelTab><PanelTab w={51}>Links</PanelTab></Tabs>
            <Masters>
              <Master><Sheets $n={1}><span /></Sheets><figcaption>[None]</figcaption></Master>
              <Master><Sheets $n={2}><span /><span /></Sheets><figcaption>A-Master</figcaption></Master>
            </Masters>
            <PageItem><PageThumb /><PageBadge>1</PageBadge></PageItem>
            <Caption>1 Page in 1 Spread</Caption>
          </Panel>
          <ColorPanel />
          <SwatchesPanel />
        </Dock>
      </Main>
      <Taskbar>
        <TaskSearch><svg width="8" height="4" viewBox="0 0 8 4" fill="none" stroke="#444"><path d="M1 4V3A3 2.5 0 0 1 7 3V4" /></svg></TaskSearch>
        {taskArt.map(([name, art]) => (
          <TaskItem key={name} $on={name === "Layout editor"} aria-label={name}><svg width="23" height="5" viewBox="0 0 23 5">{art}</svg></TaskItem>
        ))}
        <TrayIcons><svg width="34" height="3" viewBox="0 0 34 3"><circle cx="8" cy="4" r="4" fill="#20a080" /><circle cx="26" cy="4" r="4" fill="#e8b030" /></svg></TrayIcons>
      </Taskbar>
    </Shell>
  );
}
